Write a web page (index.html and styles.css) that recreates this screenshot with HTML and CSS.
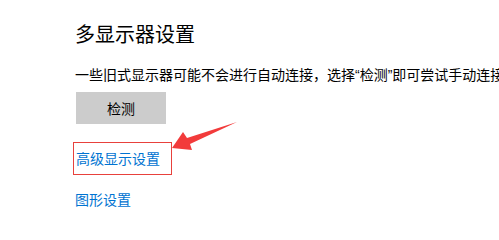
FILE: index.html
```html
<!DOCTYPE html>
<html lang="zh-CN">
<head>
<meta charset="utf-8">
<link rel="stylesheet" href="styles.css">
</head>
<body>
<div class="page">
  <h1 class="title">多显示器设置</h1>
  <p class="desc">一些旧式显示器可能不会进行自动连接，选择“检测”即可尝试手动连接</p>
  <button class="detect">检测</button>
  <div class="highlight"><a class="link">高级显示设置</a></div>
  <a class="link link-second">图形设置</a>
  <svg class="arrow" width="499" height="220" viewBox="0 0 499 220">
    <polygon points="172,148 183,132 187,138 237,122 190,144 192,150" fill="#f23b3b"/>
  </svg>
</div>
</body>
</html>
```

FILE: styles.css
```css
html, body {
  margin: 0;
  padding: 0;
  background: #ffffff;
}
.page {
  position: relative;
  width: 499px;
  height: 220px;
  overflow: hidden;
  box-sizing: border-box;
  padding: 21px 0 0 75px;
  display: flex;
  flex-direction: column;
  align-items: flex-start;
  font-family: "Liberation Sans", "Noto Sans CJK SC", sans-serif;
  color: #000;
}
.title {
  margin: 0;
  font-size: 20px;
  line-height: 28px;
  font-weight: normal;
}
.desc {
  margin: 16px 0 0;
  font-size: 14px;
  line-height: 20px;
  white-space: nowrap;
}
.detect {
  margin-top: 7px;
  width: 90px;
  height: 32px;
  margin-left: 1px;
  border: none;
  background: #cccccc;
  font-family: inherit;
  font-size: 14px;
  color: #000;
  padding: 0;
}
.highlight {
  margin-top: 18px;
  margin-left: -2px;
  width: 99px;
  height: 33px;
  box-sizing: border-box;
  border: 1px solid #e8413c;
  padding-left: 2px;
  display: flex;
  align-items: center;
}
.link {
  font-size: 14px;
  line-height: 20px;
  color: #0073d1;
  text-decoration: none;
}
.link-second {
  margin-top: 15px;
}
.arrow {
  position: absolute;
  left: 0;
  top: 0;
}
```
